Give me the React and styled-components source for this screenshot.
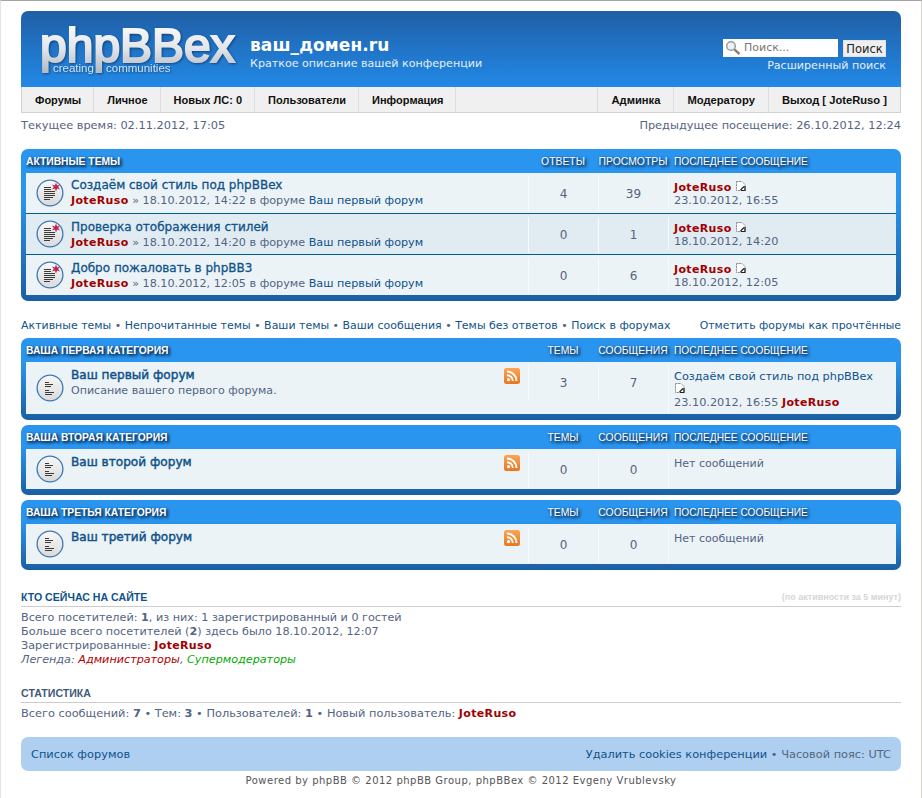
import React from "react";
import styled, { createGlobalStyle } from "styled-components";

const GlobalStyle = createGlobalStyle`
  html, body {
    margin: 0;
    padding: 0;
    background: #fff;
  }
  body {
    font-family: "DejaVu Sans", Verdana, sans-serif;
    font-size: 11px;
    color: #536482;
  }
`;

const activeTopics = [
  { title: "Создаём свой стиль под phpBBex", date: "18.10.2012, 14:22", replies: 4, views: 39, last: "23.10.2012, 16:55" },
  { title: "Проверка отображения стилей", date: "18.10.2012, 14:20", replies: 0, views: 1, last: "18.10.2012, 14:20" },
  { title: "Добро пожаловать в phpBB3", date: "18.10.2012, 12:05", replies: 0, views: 6, last: "18.10.2012, 12:05" },
];

const categories = [
  { name: "Ваша первая категория", forum: "Ваш первый форум", desc: "Описание вашего первого форума.", topics: 3, posts: 7, hasLast: true },
  { name: "Ваша вторая категория", forum: "Ваш второй форум", topics: 0, posts: 0 },
  { name: "Ваша третья категория", forum: "Ваш третий форум", topics: 0, posts: 0 },
];

const FolderIcon = ({ unread }) => (
  <svg width="28" height="28" viewBox="0 0 28 28">
    <defs>
      <linearGradient id="disc" x1="0" y1="0" x2="0" y2="1">
        <stop offset="0" stopColor="#f8f8f8" />
        <stop offset="1" stopColor="#dadada" />
      </linearGradient>
    </defs>
    <circle cx="14" cy="14" r="12.9" fill="url(#disc)" stroke="#3b7ab6" strokeWidth="1.3" />
    {unread ? (
      <path
        d="M8 8.5h7M8 10.5h7M8 12.5h11M8 14.5h11M8 16.5h11M8 18.5h9M8 20.5h6"
        stroke="#3a3a3a"
        strokeWidth="1"
        fill="none"
      />
    ) : (
      <path
        d="M9 8.5h4M9 10.5h8M9 12.5h6M9 16.5h4M9 18.5h9M9 20.5h7"
        stroke="#3a3a3a"
        strokeWidth="1"
        fill="none"
      />
    )}
    {unread && (
      <path
        d="M20 3.5l1.1 3 3-1-1.9 2.5 1.9 2.5-3-.9-1.1 3-1.1-3-3 .9 1.9-2.5-1.9-2.5 3 1z"
        fill="#c0234f"
      />
    )}
  </svg>
);

const LastPostIcon = () => (
  <PostIconSvg width="10" height="10" viewBox="0 0 10 10">
    <path d="M.5.5h5.5l3 3v6h-8.500z" fill="#fff" stroke="#8f8f8f" strokeWidth="1" strokeDasharray="2 .6" />
    <path d="M4.500 9l3.500-3.500M9 5v4.500h-4" stroke="#222" strokeWidth="1.200" fill="none" />
  </PostIconSvg>
);

const RssIcon = () => (
  <svg width="16" height="16" viewBox="0 0 16 16">
    <defs>
      <linearGradient id="rss" x1="0" y1="0" x2="0" y2="1">
        <stop offset="0" stopColor="#f9a655" />
        <stop offset="1" stopColor="#e9761f" />
      </linearGradient>
    </defs>
    <rect x="0" y="0" width="16" height="16" rx="2.5" fill="url(#rss)" />
    <circle cx="4.5" cy="11.7" r="1.6" fill="#fff" />
    <path d="M3 7.2a5.8 5.8 0 0 1 5.8 5.8" stroke="#fff" strokeWidth="1.9" fill="none" />
    <path d="M3 3.5a9.5 9.500 0 0 1 9.500 9.500" stroke="#fff" strokeWidth="1.9" fill="none" />
  </svg>
);

const SearchGlass = () => (
  <svg width="16" height="16" viewBox="0 0 16 16">
    <circle cx="6" cy="6" r="4.300" fill="#eef2f6" stroke="#9a9a9a" strokeWidth="1.500" />
    <path d="M9.300 9.300l5.200 4.700" stroke="#8c8170" strokeWidth="2.400" />
  </svg>
);

const Logo = () => (
  <LogoSvg width="204" height="62" viewBox="0 0 204 62">
    <defs>
      <linearGradient id="logoFill" x1="0" y1="0" x2="0" y2="1">
        <stop offset="0" stopColor="#ffffff" />
        <stop offset="0.55" stopColor="#e3e6ea" />
        <stop offset="1" stopColor="#b3bac2" />
      </linearGradient>
    </defs>
    <text
      x="2"
      y="41"
      fontFamily="'Liberation Sans', Arial, sans-serif"
      fontSize="48"
      fill="url(#logoFill)"
      stroke="url(#logoFill)"
      strokeWidth="2.200"
    >
      phpBBex
    </text>
    <text x="15" y="51" fontFamily="'Liberation Sans', Arial, sans-serif" fontSize="11.500" fill="#cfe3f6">
      creating
    </text>
    <text x="68" y="51" fontFamily="'Liberation Sans', Arial, sans-serif" fontSize="11.500" fill="#cfe3f6">
      communities
    </text>
  </LogoSvg>
);

const User = () => <UserName>JoteRuso</UserName>;

const Dot = () => <Bullet>•</Bullet>;

export default function App() {
  return (
    <Page>
      <GlobalStyle />
      <Header>
        <LogoSlot>
          <Logo />
        </LogoSlot>
        <SiteInfo>
          <SiteTitle>ваш_домен.ru</SiteTitle>
          <SiteDesc>Краткое описание вашей конференции</SiteDesc>
        </SiteInfo>
        <SearchBlock>
          <SearchRow>
            <SearchInput>
              <SearchGlass />
              <span>Поиск...</span>
            </SearchInput>
            <SearchButton>Поиск</SearchButton>
          </SearchRow>
          <AdvancedLink>Расширенный поиск</AdvancedLink>
        </SearchBlock>
      </Header>

      <Nav>
        <NavGroup>
          <NavItem>Форумы</NavItem>
          <NavItem>Личное</NavItem>
          <NavItem>Новых ЛС: 0</NavItem>
          <NavItem>Пользователи</NavItem>
          <NavItem>Информация</NavItem>
        </NavGroup>
        <NavGroup $right>
          <NavItem>Админка</NavItem>
          <NavItem>Модератору</NavItem>
          <NavItem>Выход [ JoteRuso ]</NavItem>
        </NavGroup>
      </Nav>

      <TimeBar>
        <span>Текущее время: 02.11.2012, 17:05</span>
        <span>Предыдущее посещение: 26.10.2012, 12:24</span>
      </TimeBar>

      <Box>
        <BoxHead>
          <BoxTitle>Активные темы</BoxTitle>
          <ColTitle>Ответы</ColTitle>
          <ColTitle>Просмотры</ColTitle>
          <LastTitle>Последнее сообщение</LastTitle>
        </BoxHead>
        {activeTopics.map((t, i) => (
          <Row key={t.title} $alt={i === 1} $divider={i > 0}>
            <MainCell $tight={i === 0}>
              <IconSlot>
                <FolderIcon unread />
              </IconSlot>
              <MainText>
                <TopicTitle>{t.title}</TopicTitle>
                <Meta>
                  <User /> » {t.date} в форуме <MetaLink>Ваш первый форум</MetaLink>
                </Meta>
              </MainText>
            </MainCell>
            <NumCell>{t.replies}</NumCell>
            <NumCell>{t.views}</NumCell>
            <LastCell>
              <div>
                <User /> <LastPostIcon />
              </div>
              <div>{t.last}</div>
            </LastCell>
          </Row>
        ))}
      </Box>

      <LinksBar>
        <span>
          <BarLink>Активные темы</BarLink> <Dot /> <BarLink>Непрочитанные темы</BarLink> <Dot />{" "}
          <BarLink>Ваши темы</BarLink> <Dot /> <BarLink>Ваши сообщения</BarLink> <Dot />{" "}
          <BarLink>Темы без ответов</BarLink> <Dot /> <BarLink>Поиск в форумах</BarLink>
        </span>
        <MarkRead>Отметить форумы как прочтённые</MarkRead>
      </LinksBar>

      <Categories>
        {categories.map((c) => (
          <Box key={c.name}>
            <BoxHead>
              <BoxTitle>{c.name}</BoxTitle>
              <ColTitle>Темы</ColTitle>
              <ColTitle>Сообщения</ColTitle>
              <LastTitle>Последнее сообщение</LastTitle>
            </BoxHead>
            <Row>
              <MainCell>
                <IconSlot>
                  <FolderIcon />
                </IconSlot>
                <MainText>
                  <ForumTitle>{c.forum}</ForumTitle>
                  {c.desc && <ForumDesc>{c.desc}</ForumDesc>}
                </MainText>
                <RssSlot>
                  <RssIcon />
                </RssSlot>
              </MainCell>
              <NumCell>{c.topics}</NumCell>
              <NumCell>{c.posts}</NumCell>
              <ForumLastCell>
                {c.hasLast ? (
                  <>
                    <MetaLink>Создаём свой стиль под phpBBex</MetaLink>
                    <div>
                      <LastPostIcon />
                    </div>
                    <div>
                      23.10.2012, 16:55 <User />
                    </div>
                  </>
                ) : (
                  <NoPosts>Нет сообщений</NoPosts>
                )}
              </ForumLastCell>
            </Row>
          </Box>
        ))}
      </Categories>

      <OnlineSection>
        <SectionHead>
          <SectionTitle>Кто сейчас на сайте</SectionTitle>
          <SectionNote>(по активности за 5 минут)</SectionNote>
        </SectionHead>
        <SectionBody>
          <div>
            Всего посетителей: <b>1</b>, из них: 1 зарегистрированный и 0 гостей
          </div>
          <div>
            Больше всего посетителей (<b>2</b>) здесь было 18.10.2012, 12:07
          </div>
          <div>
            Зарегистрированные: <User />
          </div>
          <Legend>
            Легенда: <LegendAdmin>Администраторы</LegendAdmin>, <LegendMod>Супермодераторы</LegendMod>
          </Legend>
        </SectionBody>
      </OnlineSection>

      <StatsSection>
        <SectionHead>
          <StatsTitle>Статистика</StatsTitle>
        </SectionHead>
        <StatsBody>
          Всего сообщений: <b>7</b> <Dot /> Тем: <b>3</b> <Dot /> Пользователей: <b>1</b> <Dot /> Новый пользователь:{" "}
          <User />
        </StatsBody>
      </StatsSection>

      <FooterBar>
        <BarLink>Список форумов</BarLink>
        <span>
          <BarLink>Удалить cookies конференции</BarLink> <Dot /> Часовой пояс: UTC
        </span>
      </FooterBar>
      <Copyright>Powered by phpBB © 2012 phpBB Group, phpBBex © 2012 Evgeny Vrublevsky</Copyright>
    </Page>
  );
}

const Page = styled.div`
  box-sizing: border-box;
  width: 922px;
  height: 798px;
  overflow: hidden;
  padding: 10px 20px 0;
  border-top: 1px solid #a4a4a4;
  border-left: 1px solid #e4e4e4;
  border-right: 1px solid #d6d3c8;
  line-height: 14px;
`;

const Header = styled.div`
  display: flex;
  height: 76px;
  box-sizing: border-box;
  background: linear-gradient(#1f5fa6, #2289e6);
  border-radius: 7px 7px 0 0;
  color: #fff;
`;

const LogoSlot = styled.div`
  padding: 10px 0 0 17px;
  width: 212px;
  flex: none;
`;

const LogoSvg = styled.svg`
  display: block;
  overflow: visible;
  filter: drop-shadow(1px 1px 1px rgba(0, 30, 70, 0.55));
`;

const SiteInfo = styled.div`
  padding-top: 24px;
  flex: 1;
`;

const SiteTitle = styled.div`
  font-size: 17px;
  font-weight: bold;
  letter-spacing: 0.1px;
  line-height: 20px;
`;

const SiteDesc = styled.div`
  font-size: 11.1px;
  line-height: 14px;
  margin-top: 2px;
  color: #e4effa;
`;

const SearchBlock = styled.div`
  padding: 28px 15px 0 0;
  display: flex;
  flex-direction: column;
  align-items: flex-end;
`;

const SearchRow = styled.div`
  display: flex;
  align-items: flex-end;
  gap: 5px;
`;

const SearchInput = styled.div`
  box-sizing: border-box;
  width: 115px;
  height: 18px;
  background: #fff;
  color: #777;
  display: flex;
  align-items: center;
  gap: 3px;
  padding-left: 2px;
`;

const SearchButton = styled.div`
  box-sizing: border-box;
  width: 43px;
  height: 17px;
  line-height: 16px;
  text-align: center;
  background: #efefef;
  border: 1px solid #e3e3e3;
  font-size: 11.5px;
  color: #222;
`;

const AdvancedLink = styled.div`
  margin-top: 2px;
  font-size: 11.1px;
  color: #e4effa;
`;

const Nav = styled.div`
  display: flex;
  justify-content: space-between;
  height: 26px;
  box-sizing: border-box;
  background: #f0f0f0;
  border: 1px solid #d2d2d2;
  border-top: none;
  font-family: "Liberation Sans", Arial, sans-serif;
  font-size: 11px;
  font-weight: bold;
  color: #111;
`;

const NavGroup = styled.div`
  display: flex;
  ${(p) =>
    p.$right &&
    `
    font-size: 11.2px;
    border-left: 1px solid #ddd;
    & > div {
      padding: 1px 13px 0;
    }
    & > div:last-child {
      border-right: none;
    }
  `}
`;

const NavItem = styled.div`
  display: flex;
  align-items: center;
  padding: 1px 12px 0 13px;
  border-right: 1px solid #ddd;
`;

const TimeBar = styled.div`
  display: flex;
  justify-content: space-between;
  padding-top: 5px;
  height: 36px;
  box-sizing: border-box;
  font-size: 11.35px;
`;

const Box = styled.div`
  background: linear-gradient(#2a95ef 30%, #1a5fa4);
  border-radius: 7px;
  padding: 0 5px 6px;
`;

const Categories = styled.div`
  display: flex;
  flex-direction: column;
  gap: 5px;
`;

const BoxHead = styled.div`
  display: grid;
  grid-template-columns: 1fr 70px 70px 228px;
  height: 24px;
  padding-top: 2px;
  box-sizing: border-box;
  align-items: center;
  color: #fff;
  font-family: "Liberation Sans", Arial, sans-serif;
  font-size: 10.4px;
  text-transform: uppercase;
  text-shadow: 1px 1px 3px #0c2f57, 2px 2px 3px #0c2f57;
`;

const BoxTitle = styled.div`
  font-weight: bold;
  font-size: 10.300px;
`;

const ColTitle = styled.div`
  text-align: center;
  white-space: nowrap;
`;

const LastTitle = styled.div`
  padding-left: 6px;
  font-size: 10.200px;
  white-space: nowrap;
`;

const Row = styled.div`
  display: grid;
  grid-template-columns: 1fr 70px 70px 228px;
  min-height: ${(p) => (p.$divider ? "41px" : "40px")};
  box-sizing: border-box;
  background: ${(p) => (p.$alt ? "#e1ebf2" : "#ecf3f7")};
  ${(p) => p.$divider && "border-top: 1px solid #005d92;"}
`;

const MainCell = styled.div`
  display: flex;
  position: relative;
  padding: ${(p) => (p.$tight ? "4px" : "5px")} 0 0 10px;
`;

const IconSlot = styled.div`
  width: 35px;
  flex: none;
  align-self: center;
  line-height: 0;
  margin-top: -5px;
`;

const MainText = styled.div`
  flex: 1;
`;

const TopicTitle = styled.div`
  color: #105289;
  font-size: 12px;
  line-height: 16px;
  -webkit-text-stroke: 0.3px #105289;
`;

const ForumTitle = styled(TopicTitle)`
  font-size: 12.1px;
  -webkit-text-stroke: 0.45px #105289;
`;

const Meta = styled.div`
  font-size: 11.2px;
  line-height: 14px;
  margin-top: 1px;
  white-space: nowrap;
`;

const ForumDesc = styled(Meta)`
  font-size: 11.05px;
`;

const MetaLink = styled.span`
  color: #105289;
`;

const UserName = styled.span`
  color: #a00000;
  font-size: 11px;
  letter-spacing: 0.35px;
  font-weight: bold;
`;

const PostIconSvg = styled.svg`
  margin-left: 1px;
`;

const RssSlot = styled.div`
  position: absolute;
  top: 6px;
  right: 8px;
  line-height: 0;
`;

const NumCell = styled.div`
  display: flex;
  justify-content: center;
  align-items: center;
  align-self: start;
  font-size: 12px;
  height: 36px;
  margin-top: 3px;
  border-left: 1px solid #f8fbfc;
`;

const LastCell = styled.div`
  padding: 5px 0 0 5px;
  margin: 3px 0 4px;
  border-left: 1px solid #f8fbfc;
  font-size: 11.3px;
  line-height: 13px;
`;

const ForumLastCell = styled(LastCell)`
  margin-bottom: 0;
  padding-bottom: 5px;
`;

const NoPosts = styled.span`
  font-size: 11px;
`;

const LinksBar = styled.div`
  display: flex;
  justify-content: space-between;
  height: 37px;
  box-sizing: border-box;
  padding-top: 18px;
  font-size: 10.97px;
  color: #105289;
`;

const BarLink = styled.span`
  color: #105289;
`;

const MarkRead = styled(BarLink)`
  font-size: 10.85px;
`;

const Bullet = styled.span`
  color: #536482;
`;

const OnlineSection = styled.div`
  margin-top: 20px;
`;

const StatsSection = styled.div`
  margin-top: 19px;
`;

const SectionHead = styled.div`
  display: flex;
  justify-content: space-between;
  align-items: flex-start;
  height: 16px;
  border-bottom: 1px solid #ccc;
`;

const SectionTitle = styled.div`
  color: #105289;
  font-family: "Liberation Sans", Arial, sans-serif;
  font-weight: bold;
  font-size: 10.6px;
  text-transform: uppercase;
`;

const StatsTitle = styled(SectionTitle)`
  color: #3f5a7a;
`;

const SectionNote = styled.div`
  font-family: "Liberation Sans", Arial, sans-serif;
  font-weight: bold;
  font-size: 9px;
  color: #d6d6d6;
`;

const SectionBody = styled.div`
  padding-top: 4px;
  font-size: 11.2px;
`;

const StatsBody = styled(SectionBody)`
  padding-top: 3px;
  font-size: 11.35px;
`;

const Legend = styled.div`
  font-style: italic;
`;

const LegendAdmin = styled.span`
  color: #b00000;
`;

const LegendMod = styled.span`
  color: #00aa00;
`;

const FooterBar = styled.div`
  display: flex;
  justify-content: space-between;
  align-items: center;
  margin-top: 16px;
  height: 34px;
  box-sizing: border-box;
  padding: 0 10px 1px;
  background: #afcff1;
  border-radius: 7px;
  font-size: 11.35px;
`;

const Copyright = styled.div`
  text-align: center;
  font-size: 10px;
  letter-spacing: 0.5px;
  padding-top: 3px;
  color: #555;
`;
